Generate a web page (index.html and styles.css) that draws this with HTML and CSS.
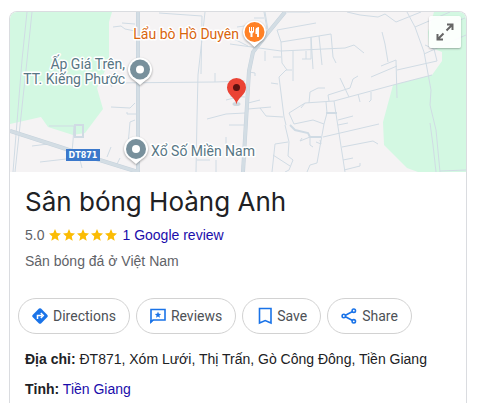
FILE: index.html
```html
<!DOCTYPE html>
<html lang="vi">
<head>
  <meta charset="UTF-8">
  <meta name="viewport" content="width=device-width, initial-scale=1.0">
  <title>Sân bóng Hoàng Anh</title>
  <link rel="stylesheet" href="styles.css">
</head>
<body>
  <div class="card">
    <div class="map">
      <svg class="map-canvas" viewBox="10 12 456 160" preserveAspectRatio="xMidYMid slice">
        <rect class="land" x="-200" y="12" width="900" height="160"/>
        <path class="park" d="M10 12H112L109 22V62L97 88L103 109L85 133L73 135L48 127L41 117L10 124Z"/>
        <path class="park" d="M434 12H466V172H418L407 168L384 145L383 122L393 85L432 75L442 61V52L429 47L428 32Z"/>

        <!-- small streets -->
        <g class="street">
          <path d="M27 12L22 60L13 172M32 12L26 70L15 172M73 141L74 126M49 126H75M73 141L72 152M32 146L48 144M40 162L75 158"/>
          <path d="M111 147L107 157M120 158L117 164M80 160L82 168"/>
          <path d="M113 27L121 26L125 29L135 31M122 23L135 24M111 107L130 108L135 103M127 112V114H137M135 120L130 122L128 145"/>
          <path d="M159 13L202 16L201 74M205 12L198 75L197 118L196 172M112 87L110 83L215 82L245 81M215 82V73"/>
          <path d="M226 100L234 98M207 119L226 114L245 113M229 125H245M226 137V155M197 160H210M216 160V172M230 96L245 97"/>
          <path d="M230 44L281 51L345 48L354 45L364 53M234 39L248 46M264 12L267 29M277 30L316 23M277 30L281 42L282 63L287 70M254 18H264M237 27L252 25"/>
          <path d="M281 42L331 34L333 57L336 63M311 37L313 69M319 36L322 65M306 51V59M302 59H311V37M265 51V61M273 57H281M293 51V81M292 70H286L279 77L284 117L286 125"/>
          <path d="M271 83L278 84M249 72L255 73V76M248 109L271 107M248 103L260 100M260 108L266 116L283 117"/>
          <path d="M289 113L305 103L334 101L397 84L432 75M289 113L294 124L313 120L324 124M309 103L310 92L318 88H325M329 101L328 95L350 88L353 79L358 76M340 78L349 97M301 108L305 103"/>
          <path d="M358 94L360 102M371 92V100L369 102M334 101L345 172M326 102L327 113L324 124L317 163L310 165L307 172M338 120L353 116M338 125L348 123M323 137L379 124"/>
          <path d="M342 147L373 141L378 144M343 160L353 158M344 170L360 166V163M302 138L300 141L310 137V145L313 147M316 142L321 144L320 140"/>
          <path d="M285 125L289 142L288 156L293 160L289 170L285 172M288 142L275 144L272 172M273 155L290 166"/>
          <path d="M347 12L360 15L378 17L385 14L396 22L421 12M382 32L385 44L388 62M381 66L396 60L397 98M371 77L397 66M397 70L437 61L434 49"/>
          <path d="M407 12L415 27L424 52L431 90L430 105L436 130L440 172M415 27L450 12M424 54L466 35M430 123L433 145L436 172M440 171L466 170"/>
          <path d="M425 45L434 49M285 12L310 12M265 12L268 30M465 18L450 24"/>
        </g>
        <g class="street wide">
          <path d="M290 125L295 130L308 133L310 137H321M326 113H337M75 125H83V137H75Z"/>
        </g>

        <!-- main roads -->
        <path class="road edge" d="M138 12L138 172M10 131L60 147L90 157L138 172M285 12L267 34L253 52L249 71L243 172"/>
        <path class="road" d="M138 12L138 172M10 131L60 147L90 157L138 172M285 12L267 34L253 52L249 71L243 172"/>

        <rect class="route" x="66" y="149" width="34" height="12"/>
        <text class="route-name" x="83" y="158">DT871</text>

        <text class="place food" x="239" y="39">Lẩu bò Hồ Duyên</text>
        <text class="place" x="125" y="69">Ấp Giá Trên,</text>
        <text class="place" x="125" y="84">TT. Kiếng Phước</text>
        <text class="place start" x="151" y="156">Xổ Số Miền Nam</text>

        <g class="pin">
          <path d="M140 85L134 80A12 12 0 1 1 146 80Z"/>
          <circle class="pin-gray" cx="140" cy="69.500" r="10"/>
          <circle cx="140" cy="69.500" r="4"/>
        </g>
        <g class="pin">
          <path d="M136 164L130 159A12 12 0 1 1 142 159Z"/>
          <circle class="pin-gray" cx="136" cy="149" r="10"/>
          <circle cx="136" cy="149" r="4"/>
        </g>
        <g class="pin">
          <path d="M254.500 47L249 42A11.500 11.500 0 1 1 260 42Z"/>
          <circle class="pin-orange" cx="254.500" cy="32" r="10"/>
          <path d="M249 27h1v4h1v-4h1v4h1v-4h1v5l-1.500 1.500V37h-2v-3.500L249 32ZM259 27v10h-2v-3h-1.500v-4.500Q256 27 259 27Z"/>
        </g>
        <ellipse class="pin-shade" cx="236.500" cy="104" rx="4" ry="2"/>
        <path class="pin-red" d="M236.500 104.500C236 98 227 95 227 87.500A9.500 9.500 0 0 1 246 87.500C246 95 237 98 236.500 104.500Z"/>
        <circle class="pin-dot" cx="236.500" cy="87.500" r="3.500"/>
      </svg>
      <button class="expand" type="button" aria-label="Expand map">
        <svg width="18" height="18" viewBox="0 0 18 18"><path d="M10.500 7.500L16 2M11 1.500H16.500V7M7.500 10.500L2 16M1.500 11V16.500H7"/></svg>
      </button>
    </div>

    <div class="info">
      <h1 class="title">Sân bóng Hoàng Anh</h1>
      <div class="rating">
        <span>5.0</span>
        <svg class="stars" width="68" height="12" viewBox="0 0 68 12">
          <defs>
            <path id="star" d="M6 0L7.700 4.100L12 4.500L8.700 7.400L9.700 11.700L6 9.400L2.300 11.700L3.300 7.400L0 4.500L4.300 4.100Z"/>
          </defs>
          <use href="#star"/>
          <use href="#star" x="14"/>
          <use href="#star" x="28"/>
          <use href="#star" x="42"/>
          <use href="#star" x="56"/>
        </svg>
        <a href="#">1 Google review</a>
      </div>
      <div class="category">Sân bóng đá ở Việt Nam</div>
    </div>

    <div class="actions">
      <button class="action" type="button">
        <svg width="20" height="20" viewBox="0 0 20 20"><path class="fill" d="M9 2.600Q10 1.700 11 2.600L17.400 9Q18.300 10 17.400 11L11 17.400Q10 18.300 9 17.400L2.600 11Q1.700 10 2.600 9Z"/><path class="knock" d="M7.500 13V9.500H12M10.800 7L13.300 9.500L10.800 12"/></svg>
        Directions
      </button>
      <button class="action" type="button">
        <svg width="20" height="20" viewBox="0 0 20 20"><path class="line" d="M3 16V3.500H17V14H5Z"/><path class="fill" d="M2.200 14H6L2.200 17.500ZM10 5.500L10.900 7.700L13.200 7.900L11.400 9.400L12 11.700L10 10.500L8 11.700L8.600 9.400L6.800 7.900L9.100 7.700Z"/></svg>
        Reviews
      </button>
      <button class="action" type="button">
        <svg width="20" height="20" viewBox="0 0 20 20"><path class="line" d="M5.500 2.500H17V17L11.200 14.500L5.500 17Z"/></svg>
        Save
      </button>
      <button class="action" type="button">
        <svg width="20" height="20" viewBox="0 0 20 20"><path class="line" d="M14.500 5L5 10L14.500 15"/><g class="node"><circle cx="14.800" cy="4.700" r="1.700"/><circle cx="4.800" cy="10" r="1.700"/><circle cx="14.800" cy="15.300" r="1.700"/></g></svg>
        Share
      </button>
    </div>

    <div class="details">
      <div><b>Địa chỉ:</b> ĐT871, Xóm Lưới, Thị Trấn, Gò Công Đông, Tiền Giang</div>
      <div><b>Tỉnh:</b> <a href="#">Tiền Giang</a></div>
    </div>
  </div>
</body>
</html>
```

FILE: styles.css
```css
* {
  box-sizing: border-box;
}
body {
  margin: 0;
  padding: 11px 11px 0 9px;
  background-color: #fff;
  color: #202124;
  font-family: "Liberation Sans", Arial, sans-serif;
  font-size: 14px;
  line-height: 20px;
}
a {
  color: #1a0dab;
  text-decoration: none;
}
.card {
  min-height: calc(100vh - 11px);
  border: 1px solid #dadce0;
  border-bottom: none;
  border-radius: 8px 8px 0 0;
  overflow: hidden;
}

/* map */
.map {
  position: relative;
  height: 160px;
}
.map-canvas {
  display: block;
  width: 100%;
  height: 100%;
}
.land {
  fill: #f5f3f4;
}
.park {
  fill: #d3f8e2;
}
.street {
  fill: none;
  stroke: #d0dbe4;
  stroke-width: 1;
}
.wide {
  stroke-width: 2;
}
.road {
  fill: none;
  stroke: #d3dde4;
  stroke-width: 3;
}
.edge {
  stroke: #c6d2dc;
  stroke-width: 4;
}
.route {
  fill: #3b78cb;
}
.route-name {
  fill: #fff;
  font: bold 8px "DejaVu Sans", sans-serif;
  text-anchor: middle;
}
.place {
  fill: #587684;
  stroke: #fff;
  stroke-width: 3px;
  stroke-linejoin: round;
  paint-order: stroke;
  font: 14px Roboto, sans-serif;
  text-anchor: end;
}
.start {
  text-anchor: start;
}
.food {
  fill: #d9650d;
}
.pin {
  fill: #fff;
  filter: drop-shadow(0 1px 1px rgba(0, 0, 0, 0.35));
}
.pin-gray {
  fill: #78909c;
}
.pin-orange {
  fill: #ff8126;
}
.pin-red {
  fill: #ea4335;
}
.pin-dot {
  fill: #5c1210;
}
.pin-shade {
  fill: #cfd8de;
}
.expand {
  position: absolute;
  top: 4px;
  right: 5px;
  display: flex;
  align-items: center;
  justify-content: center;
  width: 32px;
  height: 32px;
  padding: 0;
  border: none;
  border-radius: 2px;
  background-color: rgba(255, 255, 255, 0.9);
  box-shadow: 0 1px 2px rgba(0, 0, 0, 0.3);
  cursor: pointer;
}
.expand path {
  fill: none;
  stroke: #666;
  stroke-width: 2;
}

/* name and rating */
.info {
  padding: 12px 15px 0;
  color: #5f6368;
}
.title {
  margin: 0;
  color: #202124;
  font: 26px/36px Inter, sans-serif;
}
.rating {
  display: flex;
  align-items: center;
  gap: 5px;
  margin-top: 5px;
}
.stars {
  fill: #fbbc04;
}
.category {
  margin-top: 6px;
}

/* buttons */
.actions {
  display: flex;
  flex-wrap: wrap;
  gap: 6px;
  padding: 27px 8px 0;
}
.action {
  display: flex;
  align-items: center;
  gap: 3px;
  height: 36px;
  padding: 0 13px 0 11px;
  border: 1px solid #d2d2d2;
  border-radius: 18px;
  background-color: #fff;
  color: #4d5156;
  font: 14px Roboto, sans-serif;
  cursor: pointer;
}
.fill {
  fill: #1a73e8;
}
.line, .node {
  fill: none;
  stroke: #1a73e8;
  stroke-width: 1.6px;
}
.node {
  fill: #fff;
}
.knock {
  fill: none;
  stroke: #fff;
  stroke-width: 1.5px;
}

.details {
  display: grid;
  gap: 10px;
  padding: 15px;
}
```
